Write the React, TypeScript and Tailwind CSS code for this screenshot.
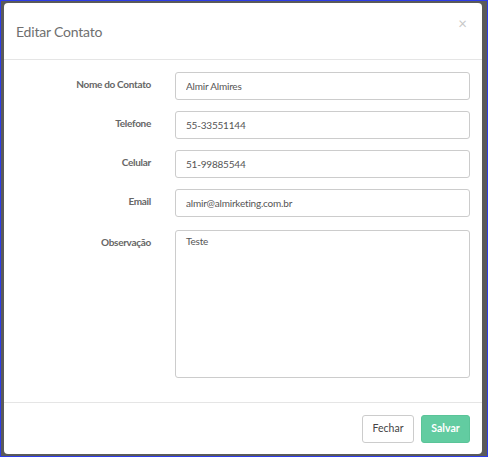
const fields = [
  { label: "Nome do Contato", value: "Almir Almires" },
  { label: "Telefone", value: "55-33551144" },
  { label: "Celular", value: "51-99885544" },
  { label: "Email", value: "almir@almirketing.com.br" },
];

const App = () => {
  return (
    <div
      className="w-[488px] h-[457px] border border-[#2d3ce8] bg-[#5a5a5a] pl-[3px] pr-[5px] pt-[2px] pb-[2px]"
      style={{ fontFamily: "Lato, 'Noto Sans', sans-serif" }}
    >
      <div className="h-full bg-white rounded-[4px] flex flex-col">
        {/* header */}
        <div className="h-[57px] border-b border-[#e5e5e5] flex items-start justify-between pl-[12px] pr-[15px]">
          <h4 className="text-[14px] tracking-[-0.2px] text-[#6f6f6f] mt-[18px]">Editar Contato</h4>
          <span className="text-[#c8c8c8] text-[15px] leading-none mt-[13px]">×</span>
        </div>

        {/* body */}
        <div className="flex-1 pt-[12px] pr-[12px]">
          {fields.map((f) => (
            <div key={f.label} className="flex items-start mb-[11px]">
              <label className="w-[147px] text-right text-[10px] tracking-[-0.3px] font-bold text-[#666] pt-[5px]">
                {f.label}
              </label>
              <div className="ml-[24px] flex-1">
                <input
                  readOnly
                  value={f.value}
                  className="w-full h-[28px] border border-[#ccc] rounded-[3px] px-[10px] text-[10px] tracking-[-0.2px] text-[#555] outline-none"
                />
              </div>
            </div>
          ))}
          <div className="flex items-start pt-[2px]">
            <label className="w-[147px] text-right text-[10px] tracking-[-0.3px] font-bold text-[#666] pt-[5px]">
              Observação
            </label>
            <div className="ml-[24px] flex-1">
              <textarea
                readOnly
                value="Teste"
                className="w-full h-[148px] border border-[#ccc] rounded-[3px] px-[10px] py-[3px] text-[10px] tracking-[-0.2px] text-[#555] outline-none resize-none block"
              />
            </div>
          </div>
        </div>

        {/* footer */}
        <div className="h-[52px] border-t border-[#e5e5e5] flex items-start justify-end gap-[7px] pr-[12px] pt-[12px]">
          <button className="h-[28px] w-[52px] border border-[#ccc] rounded-[3px] text-[10.5px] text-[#444] bg-white">
            Fechar
          </button>
          <button className="h-[28px] w-[49px] rounded-[3px] text-[10.5px] font-bold text-white bg-[#62cca1] border border-[#5ac498]">
            Salvar
          </button>
        </div>
      </div>
    </div>
  );
};

export default App;
